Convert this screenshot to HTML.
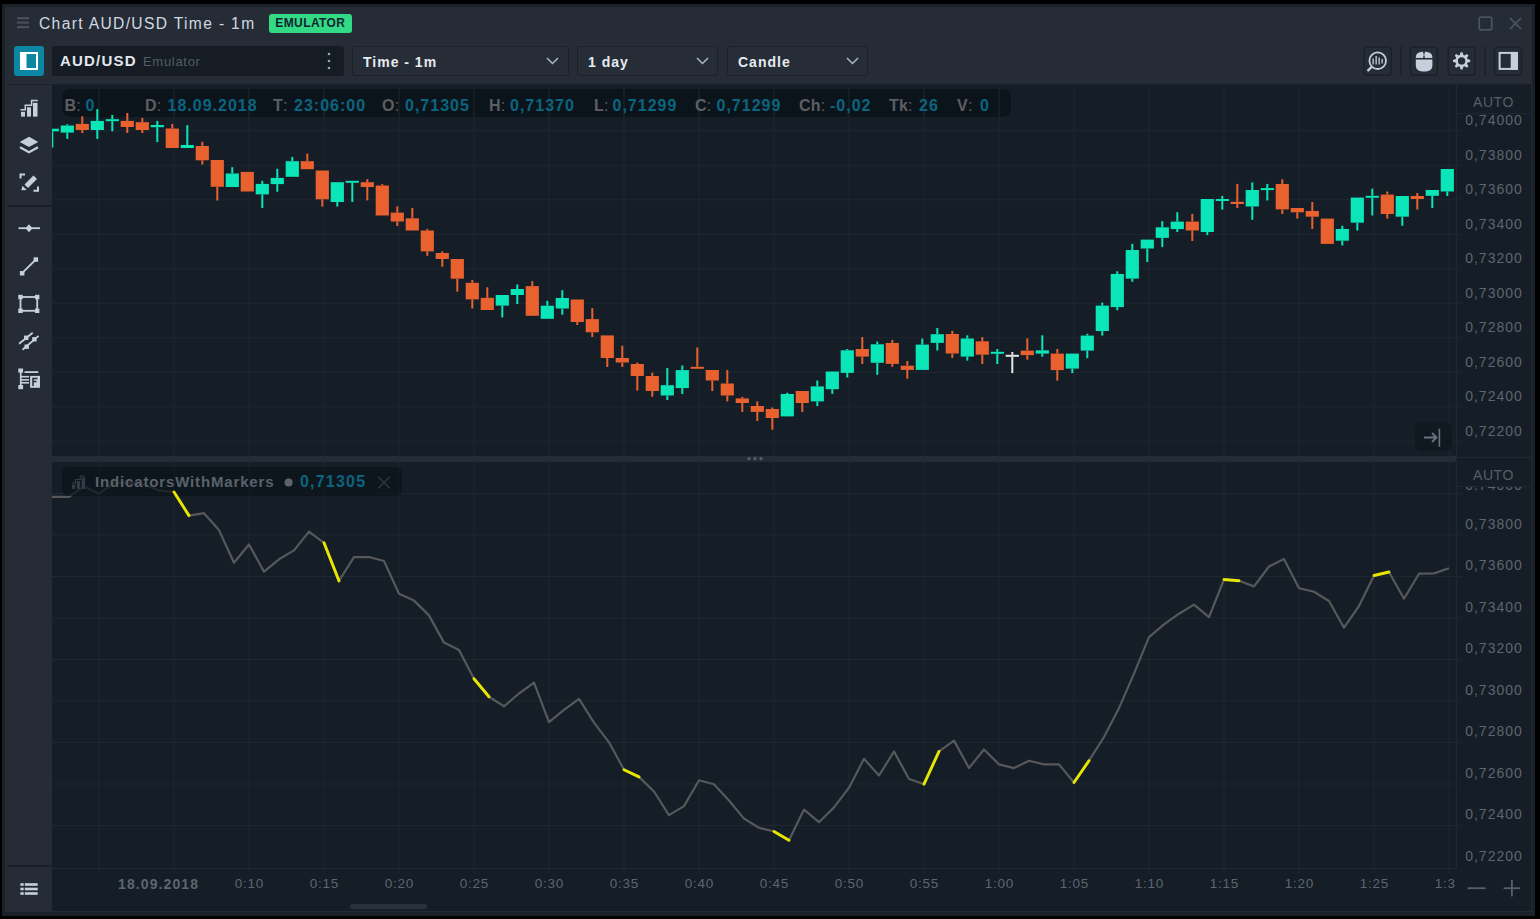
<!DOCTYPE html>
<html><head><meta charset="utf-8"><style>
*{margin:0;padding:0;box-sizing:border-box}
body{width:1540px;height:919px;background:#000;overflow:hidden;position:relative;font-family:"Liberation Sans",sans-serif}
.a{position:absolute;white-space:nowrap}
.pl{position:absolute;left:1456px;width:75px;text-align:center;font-size:14px;line-height:18px;color:#5d6670;letter-spacing:1px;text-indent:1px}
.tl{position:absolute;top:875px;width:60px;text-align:center;font-size:13.5px;line-height:18px;color:#5d6670;letter-spacing:0.8px;text-indent:0.8px}
.sel{position:absolute;top:46px;height:30px;background:#262d37;border:1.5px solid #1b2129;border-radius:3px;color:#e6ebf0;font-weight:bold;font-size:14px;line-height:31px;padding-left:10px;letter-spacing:1px}
.inf{position:absolute;top:96.5px;font-size:16px;line-height:18px;font-weight:bold;color:#5c5e62;white-space:nowrap;letter-spacing:0.2px}
.inf.v{color:#0b6580;letter-spacing:1px}
</style></head><body>
<div class="a" style="left:2px;top:4px;width:1533px;height:912px;background:#1b2129"></div>
<div class="a" style="left:5px;top:7px;width:1527px;height:905px;background:#262c36"></div>
<div class="a" style="left:7px;top:84px;width:1524px;height:1px;background:#1b2129"></div>
<div class="a" style="left:52px;top:85px;width:1479.5px;height:826.5px;background:#151d27"></div>
<!-- header -->
<div class="a" style="left:39px;top:14px;font-size:15.6px;line-height:20px;color:#d0d9e2;letter-spacing:1.35px">Chart AUD/USD Time - 1m</div>
<div class="a" style="left:269px;top:14.2px;width:82.7px;height:18.6px;background:#33da86;border-radius:3px;color:#0f2430;font-size:12px;font-weight:bold;line-height:19px;text-align:center;letter-spacing:0.4px">EMULATOR</div>
<div class="a" style="left:14px;top:46px;width:30px;height:30px;background:#0b87a3;border-radius:3px"></div>
<div class="a" style="left:52px;top:46px;width:292px;height:30px;background:#151c24;border-radius:3px"></div>
<div class="a" style="left:60px;top:52px;font-size:15px;font-weight:bold;line-height:18px;color:#e1e7ed;letter-spacing:1.2px">AUD/USD</div>
<div class="a" style="left:143px;top:54px;font-size:13px;line-height:16px;color:#535b65;letter-spacing:0.7px">Emulator</div>
<div class="sel" style="left:352px;width:217px">Time - 1m</div>
<div class="sel" style="left:577px;width:141px">1 day</div>
<div class="sel" style="left:727px;width:141px">Candle</div>
<!-- toolbar separators -->
<div class="a" style="left:6.5px;top:205px;width:45px;height:1.5px;background:#1a2028"></div>
<div class="a" style="left:6.5px;top:865px;width:45px;height:1.5px;background:#1a2028"></div>
<!-- chart structure -->
<div class="a" style="left:52px;top:455.5px;width:1404.5px;height:6px;background:#262c36"></div>
<div class="a" style="left:1456px;top:456.5px;width:75px;height:1px;background:#232a33"></div>
<div class="a" style="left:52px;top:868px;width:1404.5px;height:1px;background:#1f2731"></div>
<div class="a" style="left:1456px;top:85px;width:1px;height:784px;background:#1f2731"></div>
<div class="a" style="left:1456px;top:113px;width:75px;height:1px;background:#1f2731"></div>
<div class="a" style="left:1456px;top:486px;width:75px;height:1px;background:#1f2731"></div>
<div class="a" style="left:1531px;top:85px;width:1px;height:827px;background:#232a33"></div>
<div class="a" style="left:52px;top:911px;width:1480px;height:1px;background:#232a33"></div>
<!-- info bar bg -->
<div class="a" style="left:61.5px;top:89.4px;width:949px;height:28px;background:rgba(10,17,24,0.75);border-radius:8px"></div>
<!-- scroll btn -->
<div class="a" style="left:350px;top:903.8px;width:77px;height:5px;background:#2a313a;border-radius:2px"></div>
<svg width="1540" height="919" style="position:absolute;left:0;top:0"><defs><clipPath id="top"><rect x="52" y="85" width="1404" height="370"/></clipPath><clipPath id="bot"><rect x="52" y="462" width="1404" height="406"/></clipPath></defs><g stroke="#1f2731" stroke-width="1"><line x1="99" y1="85" x2="99" y2="873" /><line x1="174" y1="85" x2="174" y2="873" /><line x1="249" y1="85" x2="249" y2="873" /><line x1="324" y1="85" x2="324" y2="873" /><line x1="399" y1="85" x2="399" y2="873" /><line x1="474" y1="85" x2="474" y2="873" /><line x1="549" y1="85" x2="549" y2="873" /><line x1="624" y1="85" x2="624" y2="873" /><line x1="699" y1="85" x2="699" y2="873" /><line x1="774" y1="85" x2="774" y2="873" /><line x1="849" y1="85" x2="849" y2="873" /><line x1="924" y1="85" x2="924" y2="873" /><line x1="999" y1="85" x2="999" y2="873" /><line x1="1074" y1="85" x2="1074" y2="873" /><line x1="1149" y1="85" x2="1149" y2="873" /><line x1="1224" y1="85" x2="1224" y2="873" /><line x1="1299" y1="85" x2="1299" y2="873" /><line x1="1374" y1="85" x2="1374" y2="873" /><line x1="1449" y1="85" x2="1449" y2="873" /><line x1="52" y1="130.8" x2="1462" y2="130.8" /><line x1="52" y1="165.3" x2="1462" y2="165.3" /><line x1="52" y1="199.8" x2="1462" y2="199.8" /><line x1="52" y1="234.3" x2="1462" y2="234.3" /><line x1="52" y1="268.8" x2="1462" y2="268.8" /><line x1="52" y1="303.3" x2="1462" y2="303.3" /><line x1="52" y1="337.8" x2="1462" y2="337.8" /><line x1="52" y1="372.3" x2="1462" y2="372.3" /><line x1="52" y1="406.8" x2="1462" y2="406.8" /><line x1="52" y1="441.3" x2="1462" y2="441.3" /><line x1="52" y1="493.5" x2="1462" y2="493.5" /><line x1="52" y1="535.0" x2="1462" y2="535.0" /><line x1="52" y1="576.5" x2="1462" y2="576.5" /><line x1="52" y1="618.0" x2="1462" y2="618.0" /><line x1="52" y1="659.5" x2="1462" y2="659.5" /><line x1="52" y1="701.0" x2="1462" y2="701.0" /><line x1="52" y1="742.5" x2="1462" y2="742.5" /><line x1="52" y1="784.0" x2="1462" y2="784.0" /><line x1="52" y1="825.5" x2="1462" y2="825.5" /></g><g clip-path="url(#top)"><rect x="45.7" y="128.7" width="13.2" height="2.6" fill="#0ae6b8"/><rect x="51.3" y="131.3" width="2" height="16.3" fill="#0ae6b8"/><rect x="60.7" y="125.5" width="13.2" height="7.1" fill="#0ae6b8"/><rect x="66.3" y="124.2" width="2" height="1.3" fill="#0ae6b8"/><rect x="66.3" y="132.6" width="2" height="6.3" fill="#0ae6b8"/><rect x="75.7" y="123.9" width="13.2" height="6.1" fill="#e8612f"/><rect x="81.3" y="116.3" width="2" height="7.6" fill="#e8612f"/><rect x="81.3" y="130.0" width="2" height="3.0" fill="#e8612f"/><rect x="90.7" y="120.9" width="13.2" height="9.1" fill="#0ae6b8"/><rect x="96.3" y="109.1" width="2" height="11.8" fill="#0ae6b8"/><rect x="96.3" y="130.0" width="2" height="8.9" fill="#0ae6b8"/><rect x="105.7" y="119.2" width="13.2" height="2.0" fill="#0ae6b8"/><rect x="111.3" y="115.0" width="2" height="4.2" fill="#0ae6b8"/><rect x="111.3" y="121.2" width="2" height="10.1" fill="#0ae6b8"/><rect x="120.7" y="120.9" width="13.2" height="6.1" fill="#e8612f"/><rect x="126.3" y="113.0" width="2" height="7.9" fill="#e8612f"/><rect x="126.3" y="127.0" width="2" height="6.0" fill="#e8612f"/><rect x="135.7" y="122.2" width="13.2" height="7.8" fill="#e8612f"/><rect x="141.3" y="117.9" width="2" height="4.3" fill="#e8612f"/><rect x="141.3" y="130.0" width="2" height="3.0" fill="#e8612f"/><rect x="150.7" y="125.0" width="13.2" height="2.2" fill="#0ae6b8"/><rect x="156.3" y="120.9" width="2" height="4.1" fill="#0ae6b8"/><rect x="156.3" y="127.2" width="2" height="14.8" fill="#0ae6b8"/><rect x="165.7" y="128.5" width="13.2" height="19.5" fill="#e8612f"/><rect x="171.3" y="123.9" width="2" height="4.6" fill="#e8612f"/><rect x="180.7" y="145.0" width="13.2" height="3.0" fill="#0ae6b8"/><rect x="186.3" y="125.2" width="2" height="19.8" fill="#0ae6b8"/><rect x="195.7" y="146.0" width="13.2" height="14.3" fill="#e8612f"/><rect x="201.3" y="141.8" width="2" height="4.2" fill="#e8612f"/><rect x="201.3" y="160.3" width="2" height="4.3" fill="#e8612f"/><rect x="210.7" y="160.0" width="13.2" height="26.8" fill="#e8612f"/><rect x="216.3" y="186.8" width="2" height="13.7" fill="#e8612f"/><rect x="225.7" y="173.5" width="13.2" height="13.5" fill="#0ae6b8"/><rect x="231.3" y="167.2" width="2" height="6.3" fill="#0ae6b8"/><rect x="240.7" y="171.9" width="13.2" height="19.6" fill="#e8612f"/><rect x="255.7" y="183.9" width="13.2" height="10.5" fill="#0ae6b8"/><rect x="261.3" y="180.8" width="2" height="3.1" fill="#0ae6b8"/><rect x="261.3" y="194.4" width="2" height="13.6" fill="#0ae6b8"/><rect x="270.7" y="177.9" width="13.2" height="6.2" fill="#0ae6b8"/><rect x="276.3" y="168.8" width="2" height="9.1" fill="#0ae6b8"/><rect x="276.3" y="184.1" width="2" height="7.6" fill="#0ae6b8"/><rect x="285.7" y="161.2" width="13.2" height="15.6" fill="#0ae6b8"/><rect x="291.3" y="156.9" width="2" height="4.3" fill="#0ae6b8"/><rect x="300.7" y="161.2" width="13.2" height="8.0" fill="#e8612f"/><rect x="306.3" y="153.6" width="2" height="7.6" fill="#e8612f"/><rect x="315.7" y="170.5" width="13.2" height="28.8" fill="#e8612f"/><rect x="321.3" y="199.3" width="2" height="7.3" fill="#e8612f"/><rect x="330.7" y="182.2" width="13.2" height="19.8" fill="#0ae6b8"/><rect x="336.3" y="202.0" width="2" height="4.6" fill="#0ae6b8"/><rect x="345.7" y="180.8" width="13.2" height="2.0" fill="#0ae6b8"/><rect x="351.3" y="182.8" width="2" height="19.2" fill="#0ae6b8"/><rect x="360.7" y="182.2" width="13.2" height="4.8" fill="#e8612f"/><rect x="366.3" y="179.2" width="2" height="3.0" fill="#e8612f"/><rect x="366.3" y="187.0" width="2" height="13.4" fill="#e8612f"/><rect x="375.7" y="185.5" width="13.2" height="30.0" fill="#e8612f"/><rect x="381.3" y="184.0" width="2" height="1.5" fill="#e8612f"/><rect x="390.7" y="212.6" width="13.2" height="8.9" fill="#e8612f"/><rect x="396.3" y="206.3" width="2" height="6.3" fill="#e8612f"/><rect x="396.3" y="221.5" width="2" height="4.5" fill="#e8612f"/><rect x="405.7" y="218.3" width="13.2" height="12.2" fill="#e8612f"/><rect x="411.3" y="208.0" width="2" height="10.3" fill="#e8612f"/><rect x="420.7" y="230.5" width="13.2" height="20.9" fill="#e8612f"/><rect x="426.3" y="228.9" width="2" height="1.6" fill="#e8612f"/><rect x="426.3" y="251.4" width="2" height="4.4" fill="#e8612f"/><rect x="435.7" y="253.0" width="13.2" height="6.0" fill="#e8612f"/><rect x="441.3" y="251.4" width="2" height="1.6" fill="#e8612f"/><rect x="441.3" y="259.0" width="2" height="7.8" fill="#e8612f"/><rect x="450.7" y="259.0" width="13.2" height="19.7" fill="#e8612f"/><rect x="456.3" y="278.7" width="2" height="13.0" fill="#e8612f"/><rect x="465.7" y="282.8" width="13.2" height="16.6" fill="#e8612f"/><rect x="471.3" y="280.0" width="2" height="2.8" fill="#e8612f"/><rect x="471.3" y="299.4" width="2" height="9.1" fill="#e8612f"/><rect x="480.7" y="297.8" width="13.2" height="12.2" fill="#e8612f"/><rect x="486.3" y="287.3" width="2" height="10.5" fill="#e8612f"/><rect x="495.7" y="295.0" width="13.2" height="10.6" fill="#0ae6b8"/><rect x="501.3" y="305.6" width="2" height="11.8" fill="#0ae6b8"/><rect x="510.7" y="289.0" width="13.2" height="6.0" fill="#0ae6b8"/><rect x="516.3" y="284.4" width="2" height="4.6" fill="#0ae6b8"/><rect x="516.3" y="295.0" width="2" height="9.0" fill="#0ae6b8"/><rect x="525.7" y="286.1" width="13.2" height="29.7" fill="#e8612f"/><rect x="531.3" y="281.2" width="2" height="4.9" fill="#e8612f"/><rect x="540.7" y="305.7" width="13.2" height="13.1" fill="#0ae6b8"/><rect x="546.3" y="300.8" width="2" height="4.9" fill="#0ae6b8"/><rect x="555.7" y="298.0" width="13.2" height="10.5" fill="#0ae6b8"/><rect x="561.3" y="290.2" width="2" height="7.8" fill="#0ae6b8"/><rect x="561.3" y="308.5" width="2" height="6.2" fill="#0ae6b8"/><rect x="570.7" y="299.5" width="13.2" height="22.5" fill="#e8612f"/><rect x="576.3" y="322.0" width="2" height="3.0" fill="#e8612f"/><rect x="585.7" y="319.1" width="13.2" height="13.2" fill="#e8612f"/><rect x="591.3" y="308.2" width="2" height="10.9" fill="#e8612f"/><rect x="591.3" y="332.3" width="2" height="4.7" fill="#e8612f"/><rect x="600.7" y="335.4" width="13.2" height="22.6" fill="#e8612f"/><rect x="606.3" y="358.0" width="2" height="9.0" fill="#e8612f"/><rect x="615.7" y="358.0" width="13.2" height="4.5" fill="#e8612f"/><rect x="621.3" y="345.7" width="2" height="12.3" fill="#e8612f"/><rect x="621.3" y="362.5" width="2" height="4.5" fill="#e8612f"/><rect x="630.7" y="364.0" width="13.2" height="12.0" fill="#e8612f"/><rect x="636.3" y="362.5" width="2" height="1.5" fill="#e8612f"/><rect x="636.3" y="376.0" width="2" height="14.6" fill="#e8612f"/><rect x="645.7" y="376.0" width="13.2" height="15.0" fill="#e8612f"/><rect x="651.3" y="372.7" width="2" height="3.3" fill="#e8612f"/><rect x="651.3" y="391.0" width="2" height="5.8" fill="#e8612f"/><rect x="660.7" y="385.2" width="13.2" height="10.3" fill="#0ae6b8"/><rect x="666.3" y="368.0" width="2" height="17.2" fill="#0ae6b8"/><rect x="666.3" y="395.5" width="2" height="4.5" fill="#0ae6b8"/><rect x="675.7" y="370.1" width="13.2" height="18.0" fill="#0ae6b8"/><rect x="681.3" y="365.4" width="2" height="4.7" fill="#0ae6b8"/><rect x="681.3" y="388.1" width="2" height="5.9" fill="#0ae6b8"/><rect x="690.7" y="366.8" width="13.2" height="2.0" fill="#e8612f"/><rect x="696.3" y="347.5" width="2" height="19.3" fill="#e8612f"/><rect x="705.7" y="370.0" width="13.2" height="10.5" fill="#e8612f"/><rect x="711.3" y="380.5" width="2" height="10.5" fill="#e8612f"/><rect x="720.7" y="383.5" width="13.2" height="12.0" fill="#e8612f"/><rect x="726.3" y="370.0" width="2" height="13.5" fill="#e8612f"/><rect x="726.3" y="395.5" width="2" height="5.9" fill="#e8612f"/><rect x="735.7" y="398.4" width="13.2" height="4.6" fill="#e8612f"/><rect x="741.3" y="396.8" width="2" height="1.6" fill="#e8612f"/><rect x="741.3" y="403.0" width="2" height="8.9" fill="#e8612f"/><rect x="750.7" y="406.0" width="13.2" height="5.9" fill="#e8612f"/><rect x="756.3" y="401.4" width="2" height="4.6" fill="#e8612f"/><rect x="756.3" y="411.9" width="2" height="9.1" fill="#e8612f"/><rect x="765.7" y="409.0" width="13.2" height="9.0" fill="#e8612f"/><rect x="771.3" y="407.5" width="2" height="1.5" fill="#e8612f"/><rect x="771.3" y="418.0" width="2" height="11.8" fill="#e8612f"/><rect x="780.7" y="394.0" width="13.2" height="22.4" fill="#0ae6b8"/><rect x="786.3" y="392.7" width="2" height="1.3" fill="#0ae6b8"/><rect x="795.7" y="391.0" width="13.2" height="12.0" fill="#e8612f"/><rect x="801.3" y="403.0" width="2" height="8.9" fill="#e8612f"/><rect x="810.7" y="386.4" width="13.2" height="15.0" fill="#0ae6b8"/><rect x="816.3" y="380.5" width="2" height="5.9" fill="#0ae6b8"/><rect x="816.3" y="401.4" width="2" height="4.6" fill="#0ae6b8"/><rect x="825.7" y="371.5" width="13.2" height="17.7" fill="#0ae6b8"/><rect x="831.3" y="371.4" width="2" height="0.1" fill="#0ae6b8"/><rect x="831.3" y="389.2" width="2" height="4.7" fill="#0ae6b8"/><rect x="840.7" y="350.3" width="13.2" height="22.6" fill="#0ae6b8"/><rect x="846.3" y="349.0" width="2" height="1.3" fill="#0ae6b8"/><rect x="846.3" y="372.9" width="2" height="4.6" fill="#0ae6b8"/><rect x="855.7" y="349.0" width="13.2" height="7.6" fill="#e8612f"/><rect x="861.3" y="337.0" width="2" height="12.0" fill="#e8612f"/><rect x="861.3" y="356.6" width="2" height="7.3" fill="#e8612f"/><rect x="870.7" y="344.3" width="13.2" height="18.5" fill="#0ae6b8"/><rect x="876.3" y="341.6" width="2" height="2.7" fill="#0ae6b8"/><rect x="876.3" y="362.8" width="2" height="12.0" fill="#0ae6b8"/><rect x="885.7" y="343.0" width="13.2" height="20.9" fill="#e8612f"/><rect x="891.3" y="340.0" width="2" height="3.0" fill="#e8612f"/><rect x="891.3" y="363.9" width="2" height="2.9" fill="#e8612f"/><rect x="900.7" y="365.7" width="13.2" height="4.2" fill="#e8612f"/><rect x="906.3" y="361.0" width="2" height="4.7" fill="#e8612f"/><rect x="906.3" y="369.9" width="2" height="8.9" fill="#e8612f"/><rect x="915.7" y="344.6" width="13.2" height="25.3" fill="#0ae6b8"/><rect x="921.3" y="338.5" width="2" height="6.1" fill="#0ae6b8"/><rect x="930.7" y="334.2" width="13.2" height="8.7" fill="#0ae6b8"/><rect x="936.3" y="328.0" width="2" height="6.2" fill="#0ae6b8"/><rect x="936.3" y="342.9" width="2" height="7.6" fill="#0ae6b8"/><rect x="945.7" y="334.0" width="13.2" height="19.5" fill="#e8612f"/><rect x="951.3" y="330.9" width="2" height="3.1" fill="#e8612f"/><rect x="951.3" y="353.5" width="2" height="4.4" fill="#e8612f"/><rect x="960.7" y="338.5" width="13.2" height="18.1" fill="#0ae6b8"/><rect x="966.3" y="335.3" width="2" height="3.2" fill="#0ae6b8"/><rect x="966.3" y="356.6" width="2" height="4.0" fill="#0ae6b8"/><rect x="975.7" y="341.3" width="13.2" height="13.4" fill="#e8612f"/><rect x="981.3" y="337.1" width="2" height="4.2" fill="#e8612f"/><rect x="981.3" y="354.7" width="2" height="9.3" fill="#e8612f"/><rect x="990.7" y="351.8" width="13.2" height="2.0" fill="#0ae6b8"/><rect x="996.3" y="349.0" width="2" height="2.8" fill="#0ae6b8"/><rect x="996.3" y="353.8" width="2" height="10.2" fill="#0ae6b8"/><rect x="1005.7" y="354.8" width="13.2" height="2.0" fill="#e6e6e6"/><rect x="1011.3" y="352.0" width="2" height="2.8" fill="#e6e6e6"/><rect x="1011.3" y="356.8" width="2" height="16.3" fill="#e6e6e6"/><rect x="1020.7" y="350.6" width="13.2" height="4.5" fill="#e8612f"/><rect x="1026.3" y="338.4" width="2" height="12.2" fill="#e8612f"/><rect x="1026.3" y="355.1" width="2" height="4.6" fill="#e8612f"/><rect x="1035.7" y="350.3" width="13.2" height="3.3" fill="#0ae6b8"/><rect x="1041.3" y="335.3" width="2" height="15.0" fill="#0ae6b8"/><rect x="1041.3" y="353.6" width="2" height="3.1" fill="#0ae6b8"/><rect x="1050.7" y="353.6" width="13.2" height="16.5" fill="#e8612f"/><rect x="1056.3" y="349.0" width="2" height="4.6" fill="#e8612f"/><rect x="1056.3" y="370.1" width="2" height="10.6" fill="#e8612f"/><rect x="1065.7" y="353.6" width="13.2" height="15.0" fill="#0ae6b8"/><rect x="1071.3" y="368.6" width="2" height="4.5" fill="#0ae6b8"/><rect x="1080.7" y="335.6" width="13.2" height="15.0" fill="#0ae6b8"/><rect x="1086.3" y="333.8" width="2" height="1.8" fill="#0ae6b8"/><rect x="1086.3" y="350.6" width="2" height="7.6" fill="#0ae6b8"/><rect x="1095.7" y="305.6" width="13.2" height="25.4" fill="#0ae6b8"/><rect x="1101.3" y="302.6" width="2" height="3.0" fill="#0ae6b8"/><rect x="1101.3" y="331.0" width="2" height="4.6" fill="#0ae6b8"/><rect x="1110.7" y="274.0" width="13.2" height="33.1" fill="#0ae6b8"/><rect x="1116.3" y="271.3" width="2" height="2.7" fill="#0ae6b8"/><rect x="1116.3" y="307.1" width="2" height="3.1" fill="#0ae6b8"/><rect x="1125.7" y="250.0" width="13.2" height="28.6" fill="#0ae6b8"/><rect x="1131.3" y="243.8" width="2" height="6.2" fill="#0ae6b8"/><rect x="1131.3" y="278.6" width="2" height="3.2" fill="#0ae6b8"/><rect x="1140.7" y="239.6" width="13.2" height="8.9" fill="#0ae6b8"/><rect x="1146.3" y="248.5" width="2" height="13.5" fill="#0ae6b8"/><rect x="1155.7" y="227.3" width="13.2" height="10.6" fill="#0ae6b8"/><rect x="1161.3" y="221.2" width="2" height="6.1" fill="#0ae6b8"/><rect x="1161.3" y="237.9" width="2" height="9.2" fill="#0ae6b8"/><rect x="1170.7" y="221.6" width="13.2" height="7.5" fill="#0ae6b8"/><rect x="1176.3" y="212.2" width="2" height="9.4" fill="#0ae6b8"/><rect x="1176.3" y="229.1" width="2" height="2.9" fill="#0ae6b8"/><rect x="1185.7" y="221.6" width="13.2" height="8.9" fill="#e8612f"/><rect x="1191.3" y="213.9" width="2" height="7.7" fill="#e8612f"/><rect x="1191.3" y="230.5" width="2" height="10.5" fill="#e8612f"/><rect x="1200.7" y="199.0" width="13.2" height="33.0" fill="#0ae6b8"/><rect x="1206.3" y="232.0" width="2" height="3.1" fill="#0ae6b8"/><rect x="1215.7" y="199.0" width="13.2" height="2.0" fill="#0ae6b8"/><rect x="1221.3" y="195.9" width="2" height="3.1" fill="#0ae6b8"/><rect x="1221.3" y="201.0" width="2" height="8.6" fill="#0ae6b8"/><rect x="1230.7" y="201.8" width="13.2" height="2.2" fill="#e8612f"/><rect x="1236.3" y="183.9" width="2" height="17.9" fill="#e8612f"/><rect x="1236.3" y="204.0" width="2" height="4.0" fill="#e8612f"/><rect x="1245.7" y="190.0" width="13.2" height="16.5" fill="#0ae6b8"/><rect x="1251.3" y="182.4" width="2" height="7.6" fill="#0ae6b8"/><rect x="1251.3" y="206.5" width="2" height="13.3" fill="#0ae6b8"/><rect x="1260.7" y="188.1" width="13.2" height="2.0" fill="#0ae6b8"/><rect x="1266.3" y="183.9" width="2" height="4.2" fill="#0ae6b8"/><rect x="1266.3" y="190.1" width="2" height="10.3" fill="#0ae6b8"/><rect x="1275.7" y="184.0" width="13.2" height="25.4" fill="#e8612f"/><rect x="1281.3" y="179.2" width="2" height="4.8" fill="#e8612f"/><rect x="1281.3" y="209.4" width="2" height="4.6" fill="#e8612f"/><rect x="1290.7" y="208.0" width="13.2" height="4.3" fill="#e8612f"/><rect x="1296.3" y="212.3" width="2" height="6.3" fill="#e8612f"/><rect x="1305.7" y="211.0" width="13.2" height="5.7" fill="#e8612f"/><rect x="1311.3" y="202.0" width="2" height="9.0" fill="#e8612f"/><rect x="1311.3" y="216.7" width="2" height="12.3" fill="#e8612f"/><rect x="1320.7" y="218.6" width="13.2" height="25.3" fill="#e8612f"/><rect x="1335.7" y="229.0" width="13.2" height="11.7" fill="#0ae6b8"/><rect x="1341.3" y="225.8" width="2" height="3.2" fill="#0ae6b8"/><rect x="1341.3" y="240.7" width="2" height="4.8" fill="#0ae6b8"/><rect x="1350.7" y="197.6" width="13.2" height="25.1" fill="#0ae6b8"/><rect x="1356.3" y="222.7" width="2" height="7.9" fill="#0ae6b8"/><rect x="1365.7" y="195.8" width="13.2" height="2.0" fill="#0ae6b8"/><rect x="1371.3" y="188.6" width="2" height="7.2" fill="#0ae6b8"/><rect x="1371.3" y="197.8" width="2" height="17.7" fill="#0ae6b8"/><rect x="1380.7" y="194.6" width="13.2" height="19.4" fill="#e8612f"/><rect x="1386.3" y="191.5" width="2" height="3.1" fill="#e8612f"/><rect x="1386.3" y="214.0" width="2" height="4.6" fill="#e8612f"/><rect x="1395.7" y="196.0" width="13.2" height="20.7" fill="#0ae6b8"/><rect x="1401.3" y="216.7" width="2" height="9.1" fill="#0ae6b8"/><rect x="1410.7" y="196.0" width="13.2" height="3.0" fill="#e8612f"/><rect x="1416.3" y="193.0" width="2" height="3.0" fill="#e8612f"/><rect x="1416.3" y="199.0" width="2" height="10.5" fill="#e8612f"/><rect x="1425.7" y="190.0" width="13.2" height="5.8" fill="#0ae6b8"/><rect x="1431.3" y="195.8" width="2" height="12.2" fill="#0ae6b8"/><rect x="1440.7" y="169.0" width="13.2" height="22.5" fill="#0ae6b8"/><rect x="1446.3" y="191.5" width="2" height="4.5" fill="#0ae6b8"/></g><g clip-path="url(#bot)"><path d="M40.0,496.9 L54.0,496.9 L69.0,496.9 L84.0,486.4 L99.0,493.8 L114.0,483.0 L129.0,482.8 L144.0,484.4 L159.0,490.4 L174.0,492.0 L189.0,515.6 L204.0,513.2 L219.0,530.1 L234.0,562.8 L249.0,544.5 L264.0,571.7 L279.0,559.3 L294.0,550.4 L309.0,531.6 L324.0,542.8 L339.0,580.9 L354.0,557.2 L369.0,557.0 L384.0,561.0 L399.0,593.7 L414.0,600.6 L429.0,615.4 L444.0,642.6 L459.0,649.9 L474.0,678.7 L489.0,696.8 L504.0,706.3 L519.0,693.5 L534.0,682.7 L549.0,722.2 L564.0,709.8 L579.0,698.9 L594.0,722.6 L609.0,742.3 L624.0,769.7 L639.0,776.9 L654.0,791.5 L669.0,815.1 L684.0,806.1 L699.0,780.3 L714.0,784.2 L729.0,800.5 L744.0,818.6 L759.0,827.8 L774.0,831.4 L789.0,840.3 L804.0,809.6 L819.0,822.2 L834.0,807.4 L849.0,787.7 L864.0,758.8 L879.0,775.5 L894.0,751.5 L909.0,779.0 L924.0,784.1 L939.0,751.4 L954.0,740.6 L969.0,768.0 L984.0,749.5 L999.0,764.4 L1014.0,768.1 L1029.0,760.7 L1044.0,764.4 L1059.0,764.4 L1074.0,782.5 L1089.0,760.7 L1104.0,737.0 L1119.0,708.1 L1134.0,673.6 L1149.0,637.2 L1164.0,624.4 L1179.0,613.7 L1194.0,604.6 L1209.0,617.2 L1224.0,579.5 L1239.0,580.7 L1254.0,586.4 L1269.0,566.5 L1284.0,559.1 L1299.0,588.2 L1314.0,591.8 L1329.0,601.0 L1344.0,627.7 L1359.0,606.0 L1374.0,575.5 L1389.0,572.0 L1404.0,598.7 L1419.0,573.7 L1434.0,573.4 L1449.0,568.2" fill="none" stroke="#57585a" stroke-width="2.2" stroke-linejoin="round"/></g></svg>
<div class="a" style="left:1415px;top:422px;width:36.5px;height:29px;background:#111820;border-radius:7px"></div>
<div class="a" style="left:62px;top:467px;width:340px;height:29px;background:rgba(12,19,26,0.72);border-radius:6px"></div>
<svg width="1540" height="919" style="position:absolute;left:0;top:0"><g stroke="#e6e600" stroke-width="2.9" stroke-linecap="round"><line x1="174.0" y1="492.0" x2="189.0" y2="515.6"/><line x1="324.0" y1="542.8" x2="339.0" y2="580.9"/><line x1="474.0" y1="678.7" x2="489.0" y2="696.8"/><line x1="624.0" y1="769.7" x2="639.0" y2="776.9"/><line x1="774.0" y1="831.4" x2="789.0" y2="840.3"/><line x1="924.0" y1="784.1" x2="939.0" y2="751.4"/><line x1="1074.0" y1="782.5" x2="1089.0" y2="760.7"/><line x1="1224.0" y1="579.5" x2="1239.0" y2="580.7"/><line x1="1374.0" y1="575.5" x2="1389.0" y2="572.0"/></g></svg>
<svg width="1540" height="919" style="position:absolute;left:0;top:0"><g fill="#c5d0dc"><rect x="21" y="111.8" width="4" height="4.8"/><rect x="27" y="107.3" width="4" height="9.3"/><rect x="33" y="102.8" width="4.5" height="13.8"/></g><path d="M20.5,109.8 H25.3 V105.2 H31.6 V100.6 H37.8" fill="none" stroke="#c5d0dc" stroke-width="1.5"/><path d="M19.7,141.9 L29,136.8 L38.3,141.9 L29,147 Z" fill="#c5d0dc"/><path d="M20,147.3 L29,152.2 L38,147.3" fill="none" stroke="#c5d0dc" stroke-width="2.2" stroke-linejoin="round"/><path d="M20.5,178.5 V174.5 H25" fill="none" stroke="#c5d0dc" stroke-width="2"/><path d="M33.5,190.7 H38 V186.5" fill="none" stroke="#c5d0dc" stroke-width="2"/><path d="M24.5,184.5 L33.5,175.5 L37,179 L28,188 Z" fill="#c5d0dc"/><path d="M21.3,190.3 L22.5,185.8 L26.8,190 Z" fill="#c5d0dc"/><rect x="18.5" y="227.3" width="21.5" height="1.8" fill="#c5d0dc"/><path d="M29,224.2 L32.6,228.2 L29,232.2 L25.4,228.2 Z" fill="#c5d0dc"/><line x1="22.1" y1="273.2" x2="35.8" y2="259.5" stroke="#c5d0dc" stroke-width="1.8"/><rect x="19.9" y="271" width="4.5" height="4.5" fill="#c5d0dc"/><rect x="33.6" y="257.3" width="4.5" height="4.5" fill="#c5d0dc"/><rect x="20.5" y="297" width="16.7" height="13.8" fill="none" stroke="#c5d0dc" stroke-width="1.8"/><rect x="18.3" y="294.8" width="4.4" height="4.4" fill="#c5d0dc"/><rect x="35.0" y="294.8" width="4.4" height="4.4" fill="#c5d0dc"/><rect x="18.3" y="308.6" width="4.4" height="4.4" fill="#c5d0dc"/><rect x="35.0" y="308.6" width="4.4" height="4.4" fill="#c5d0dc"/><line x1="19.1" y1="343.7" x2="32.7" y2="332.7" stroke="#c5d0dc" stroke-width="1.8"/><line x1="22.5" y1="349.8" x2="38.6" y2="335.9" stroke="#c5d0dc" stroke-width="1.8"/><rect x="24.0" y="335.6" width="4.4" height="4.4" fill="#c5d0dc"/><rect x="32.199999999999996" y="337.1" width="4.4" height="4.4" fill="#c5d0dc"/><rect x="24.5" y="344.5" width="4.4" height="4.4" fill="#c5d0dc"/><g fill="#c5d0dc"><rect x="18.3" y="368.5" width="4.8" height="4.1"/><rect x="18.3" y="385" width="4.8" height="4.2"/><rect x="19.9" y="372" width="1.7" height="13"/><rect x="24.5" y="371.2" width="13.8" height="1.8"/><rect x="21" y="375.9" width="8" height="1.6"/><rect x="21" y="379.1" width="8" height="1.6"/><rect x="21" y="382" width="8" height="1.6"/><rect x="30.1" y="375.9" width="9.9" height="11.9"/></g><path d="M33,386 V378.5 H37.5 M33,381.5 H36.5" fill="none" stroke="#262c36" stroke-width="1.5"/><g fill="#c5d0dc"><rect x="20.4" y="883.2" width="3.3" height="2.6"/><rect x="24.8" y="883.2" width="12.9" height="2.6"/><rect x="20.4" y="887.7" width="3.3" height="2.6"/><rect x="24.8" y="887.7" width="12.9" height="2.6"/><rect x="20.4" y="892.2" width="3.3" height="2.6"/><rect x="24.8" y="892.2" width="12.9" height="2.6"/></g><g fill="#4b525b"><rect x="17" y="17.2" width="12" height="2"/><rect x="17" y="21.6" width="12" height="2"/><rect x="17" y="26.1" width="12" height="2"/></g><rect x="1479.2" y="17.2" width="12.6" height="12.6" rx="2" fill="none" stroke="#4a525c" stroke-width="1.8"/><path d="M1509.8,17.8 L1521.2,29.2 M1521.2,17.8 L1509.8,29.2" stroke="#4a525c" stroke-width="1.7"/><rect x="1364.25" y="47.2" width="27" height="28" rx="3" fill="none" stroke="#1b2129" stroke-width="1.5"/><rect x="1410.35" y="47.2" width="27" height="28" rx="3" fill="none" stroke="#1b2129" stroke-width="1.5"/><rect x="1448.15" y="47.2" width="27" height="28" rx="3" fill="none" stroke="#1b2129" stroke-width="1.5"/><rect x="1494.45" y="47.2" width="27" height="28" rx="3" fill="none" stroke="#1b2129" stroke-width="1.5"/><rect x="1400" y="46.5" width="1.6" height="29" fill="#1b2129"/><rect x="1484.2" y="46.5" width="1.6" height="29" fill="#1b2129"/><circle cx="1377.7" cy="60.7" r="8.3" fill="none" stroke="#c5d0dc" stroke-width="1.8"/><path d="M1371.5,67 L1367.5,71" stroke="#c5d0dc" stroke-width="2.4"/><g fill="#c5d0dc"><rect x="1372.5" y="58.5" width="1.3" height="6"/><rect x="1375.5" y="56" width="1.3" height="8.5"/><rect x="1378.5" y="57.5" width="1.3" height="7"/><rect x="1381.5" y="59" width="1.3" height="4.5"/></g><path d="M1415.8,58 C1415.8,53 1419,51.8 1424,51.8 C1429,51.8 1432.4,53 1432.4,58 V65 C1432.4,70 1429,71.6 1424,71.6 C1419,71.6 1415.8,70 1415.8,65 Z" fill="#c5d0dc"/><rect x="1415" y="58" width="18" height="1.5" fill="#262c36"/><rect x="1423.2" y="51" width="1.6" height="7" fill="#262c36"/><rect x="1423.4" y="53.5" width="1.2" height="3" fill="#c5d0dc"/><path d="M1459.80,55.07 L1460.64,52.25 L1462.56,52.25 L1463.40,55.07 L1464.45,55.50 L1467.04,54.11 L1468.39,55.46 L1467.00,58.05 L1467.43,59.10 L1470.25,59.94 L1470.25,61.86 L1467.43,62.70 L1467.00,63.75 L1468.39,66.34 L1467.04,67.69 L1464.45,66.30 L1463.40,66.73 L1462.56,69.55 L1460.64,69.55 L1459.80,66.73 L1458.75,66.30 L1456.16,67.69 L1454.81,66.34 L1456.20,63.75 L1455.77,62.70 L1452.95,61.86 L1452.95,59.94 L1455.77,59.10 L1456.20,58.05 L1454.81,55.46 L1456.16,54.11 L1458.75,55.50Z M1465.3,60.9 A3.7,3.7 0 1 0 1457.9,60.9 A3.7,3.7 0 1 0 1465.3,60.9 Z" fill="#c5d0dc" fill-rule="evenodd"/><rect x="1499.6" y="52.9" width="17.4" height="16" fill="none" stroke="#c5d0dc" stroke-width="2"/><rect x="1510.7" y="52" width="7.3" height="17.9" fill="#c5d0dc"/><path d="M1424,437.5 H1436 M1432,433 L1436.5,437.5 L1432,442" fill="none" stroke="#6a737d" stroke-width="1.8"/><rect x="1438.6" y="428.6" width="1.6" height="18.2" fill="#6a737d"/><rect x="1467.5" y="887.3" width="18" height="1.8" fill="#58606a"/><rect x="1503.6" y="887.3" width="16.4" height="1.8" fill="#58606a"/><rect x="1511" y="880" width="1.8" height="16.4" fill="#58606a"/><circle cx="288.6" cy="482.5" r="4" fill="#5e646b"/><path d="M378,476.5 L390,488.5 M390,476.5 L378,488.5" stroke="#2f373f" stroke-width="1.5"/><g fill="#323a43"><rect x="72" y="484.5" width="3.2" height="4.5"/><rect x="76.8" y="481" width="3.2" height="8"/><rect x="81.6" y="477.5" width="3.4" height="11.5"/></g><path d="M71.5,483 H75.5 V479.5 H80.3 V476 H85.2" fill="none" stroke="#323a43" stroke-width="1.2"/><g fill="#9aa3ad"><circle cx="329" cy="54" r="1.3"/><circle cx="329" cy="61" r="1.3"/><circle cx="329" cy="68" r="1.3"/></g><path d="M547.0,58 L552.5,63.5 L558.0,58" fill="none" stroke="#aeb8c2" stroke-width="1.5"/><path d="M697.0,58 L702.5,63.5 L708.0,58" fill="none" stroke="#aeb8c2" stroke-width="1.5"/><path d="M847.0,58 L852.5,63.5 L858.0,58" fill="none" stroke="#aeb8c2" stroke-width="1.5"/><rect x="21" y="53" width="16" height="16" fill="none" stroke="#fff" stroke-width="2"/><rect x="20" y="52" width="6.5" height="18" fill="#fff"/><g fill="#59616b"><circle cx="749" cy="458.6" r="1.6"/><circle cx="755" cy="458.6" r="1.6"/><circle cx="761" cy="458.6" r="1.6"/></g></svg>
<div class="pl" style="top:111.3px">0,74000</div><div class="pl" style="top:145.8px">0,73800</div><div class="pl" style="top:180.3px">0,73600</div><div class="pl" style="top:214.8px">0,73400</div><div class="pl" style="top:249.3px">0,73200</div><div class="pl" style="top:283.8px">0,73000</div><div class="pl" style="top:318.3px">0,72800</div><div class="pl" style="top:352.8px">0,72600</div><div class="pl" style="top:387.3px">0,72400</div><div class="pl" style="top:421.8px">0,72200</div><div class="pl" style="top:514.5px">0,73800</div><div class="pl" style="top:556.0px">0,73600</div><div class="pl" style="top:597.5px">0,73400</div><div class="pl" style="top:639.0px">0,73200</div><div class="pl" style="top:680.5px">0,73000</div><div class="pl" style="top:722.0px">0,72800</div><div class="pl" style="top:763.5px">0,72600</div><div class="pl" style="top:805.0px">0,72400</div><div class="pl" style="top:846.5px">0,72200</div>
<div class="a" style="left:1456px;top:93px;width:75px;text-align:center;font-size:14px;line-height:18px;color:#555e68;letter-spacing:0.6px">AUTO</div>
<div class="a" style="left:1456px;top:466px;width:75px;text-align:center;font-size:14px;line-height:18px;color:#555e68;letter-spacing:0.6px">AUTO</div>
<div class="a" style="left:1456px;top:484px;width:75px;height:3px;overflow:hidden"></div>
<div class="a" style="left:52px;top:869px;width:1404px;height:40px;overflow:hidden"><div style="position:absolute;left:-52px;top:-869px;width:1540px;height:919px"><div class="tl" style="left:219px">0:10</div><div class="tl" style="left:294px">0:15</div><div class="tl" style="left:369px">0:20</div><div class="tl" style="left:444px">0:25</div><div class="tl" style="left:519px">0:30</div><div class="tl" style="left:594px">0:35</div><div class="tl" style="left:669px">0:40</div><div class="tl" style="left:744px">0:45</div><div class="tl" style="left:819px">0:50</div><div class="tl" style="left:894px">0:55</div><div class="tl" style="left:969px">1:00</div><div class="tl" style="left:1044px">1:05</div><div class="tl" style="left:1119px">1:10</div><div class="tl" style="left:1194px">1:15</div><div class="tl" style="left:1269px">1:20</div><div class="tl" style="left:1344px">1:25</div><div class="tl" style="left:1419px">1:30</div></div></div>
<div class="a" style="left:1456px;top:487px;width:75px;height:3px;overflow:hidden"><div class="pl" style="left:0;top:-11px">0,74000</div></div>
<div class="a" style="left:118px;top:875px;font-size:14px;font-weight:bold;line-height:18px;color:#5d6670;letter-spacing:1.1px">18.09.2018</div>
<div class="inf" style="left:64.5px">B<span style="font-weight:normal">:</span></div><div class="inf v" style="left:85.5px">0</div><div class="inf" style="left:145px">D<span style="font-weight:normal">:</span></div><div class="inf v" style="left:167.5px">18.09.2018</div><div class="inf" style="left:273px">T<span style="font-weight:normal">:</span></div><div class="inf v" style="left:294px">23:06:00</div><div class="inf" style="left:382px">O<span style="font-weight:normal">:</span></div><div class="inf v" style="left:405px">0,71305</div><div class="inf" style="left:489px">H<span style="font-weight:normal">:</span></div><div class="inf v" style="left:510px">0,71370</div><div class="inf" style="left:594px">L<span style="font-weight:normal">:</span></div><div class="inf v" style="left:612.5px">0,71299</div><div class="inf" style="left:695px">C<span style="font-weight:normal">:</span></div><div class="inf v" style="left:716.5px">0,71299</div><div class="inf" style="left:799px">Ch<span style="font-weight:normal">:</span></div><div class="inf v" style="left:830px">-0,02</div><div class="inf" style="left:889px">Tk<span style="font-weight:normal">:</span></div><div class="inf v" style="left:919px">26</div><div class="inf" style="left:957px">V<span style="font-weight:normal">:</span></div><div class="inf v" style="left:980px">0</div>
<div class="a" style="left:95px;top:473px;font-size:15px;font-weight:bold;line-height:18px;color:#5a626b;letter-spacing:0.85px">IndicatorsWithMarkers</div>
<div class="a" style="left:300px;top:473px;font-size:16px;font-weight:bold;line-height:18px;color:#0b6580;letter-spacing:1.2px">0,71305</div>
</body></html>
